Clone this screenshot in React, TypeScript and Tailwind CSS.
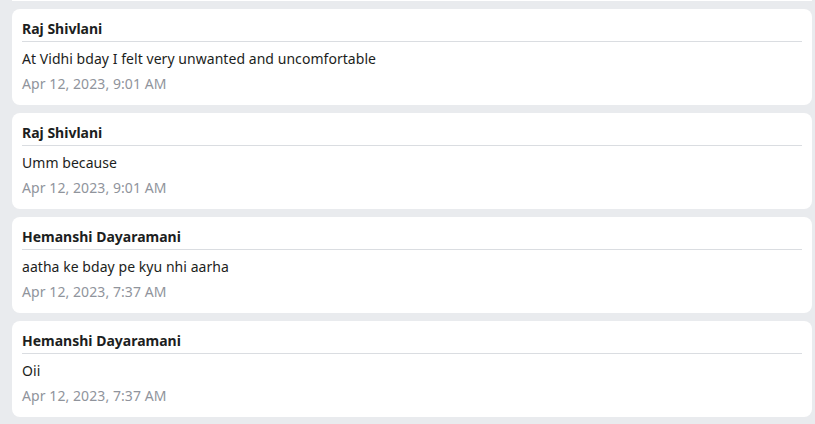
import React from "react";

const msgs = [
  { name: "Raj Shivlani", text: "At Vidhi bday I felt very unwanted and uncomfortable", date: "Apr 12, 2023, 9:01 AM" },
  { name: "Raj Shivlani", text: "Umm because", date: "Apr 12, 2023, 9:01 AM" },
  { name: "Hemanshi Dayaramani", text: "aatha ke bday pe kyu nhi aarha", date: "Apr 12, 2023, 7:37 AM" },
  { name: "Hemanshi Dayaramani", text: "Oii", date: "Apr 12, 2023, 7:37 AM" },
];

export default function App() {
  return (
    <div className="w-[815px] h-[424px] overflow-hidden bg-[#e9ebee] pl-3" style={{ fontFamily: '"Noto Sans", sans-serif' }}>
      <div className="w-[800px] h-[1px] bg-white" />
      <div className="flex flex-col gap-2 mt-2">
        {msgs.map((m, i) => (
          <div key={i} className="w-[800px] h-[96px] bg-white rounded-lg px-[10px] pt-[10px]">
            <div className="text-[14px] leading-[20px] font-bold text-[#1c1e21] pb-[2px] border-b border-[#dadde1]">{m.name}</div>
            <div className="text-[14px] leading-[20px] text-[#1c1e21] mt-[7px] tracking-[0.05px]">{m.text}</div>
            <div className="text-[14px] leading-[20px] text-[#90949c] mt-[5px] tracking-[0.08px]">{m.date}</div>
          </div>
        ))}
      </div>
    </div>
  );
}
